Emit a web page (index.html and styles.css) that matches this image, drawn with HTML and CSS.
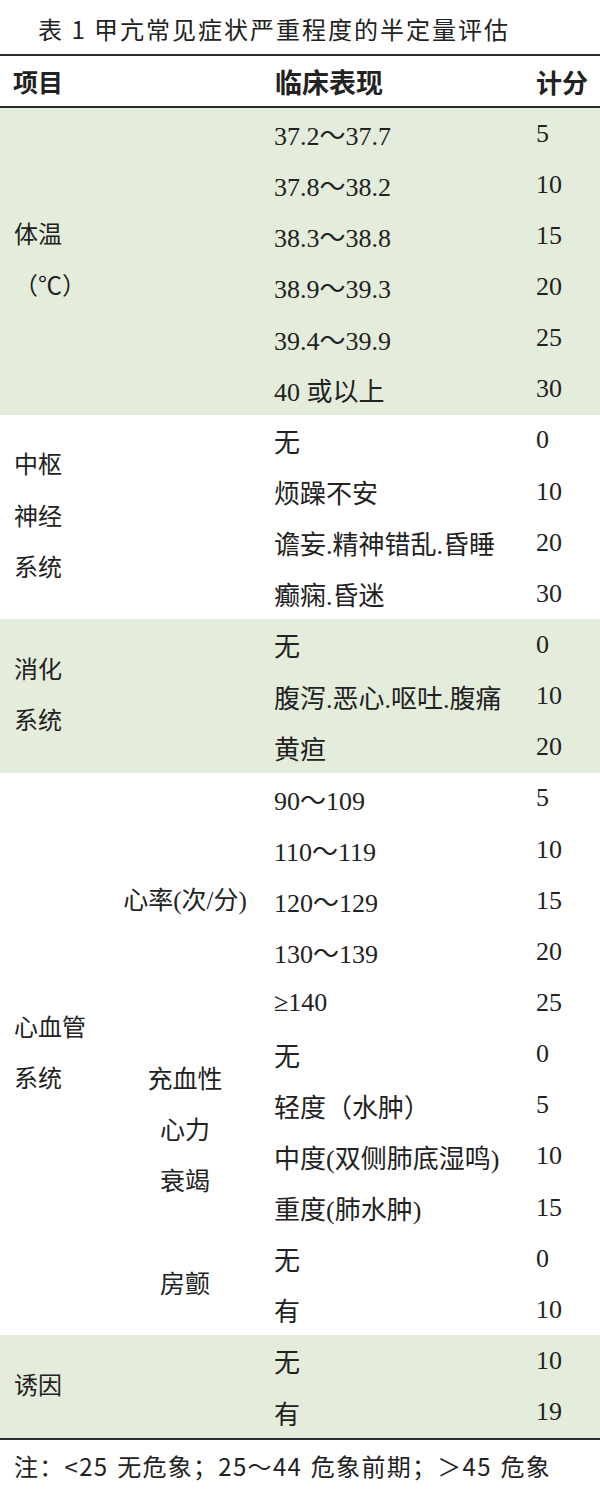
FILE: index.html
```html
<!DOCTYPE html>
<html lang="zh-CN">
<head>
<meta charset="utf-8">
<title>表1 甲亢常见症状严重程度的半定量评估</title>
<link rel="stylesheet" href="styles.css">
</head>
<body>
<div class="page">
  <div class="title">表 1 甲亢常见症状严重程度的半定量评估</div>
  <div class="table">
    <div class="row head">
      <div class="c1">项目</div>
      <div class="c3">临床表现</div>
      <div class="c4">计分</div>
    </div>

    <div class="sec green">
      <div class="cat wide" style="grid-row: 1 / span 6">体温<br>（℃）</div>
      <div class="c3">37.2～37.7</div><div class="c4">5</div>
      <div class="c3">37.8～38.2</div><div class="c4">10</div>
      <div class="c3">38.3～38.8</div><div class="c4">15</div>
      <div class="c3">38.9～39.3</div><div class="c4">20</div>
      <div class="c3">39.4～39.9</div><div class="c4">25</div>
      <div class="c3">40 或以上</div><div class="c4">30</div>
    </div>

    <div class="sec">
      <div class="cat wide" style="grid-row: 1 / span 4">中枢<br>神经<br>系统</div>
      <div class="c3">无</div><div class="c4">0</div>
      <div class="c3">烦躁不安</div><div class="c4">10</div>
      <div class="c3">谵妄.精神错乱.昏睡</div><div class="c4">20</div>
      <div class="c3">癫痫.昏迷</div><div class="c4">30</div>
    </div>

    <div class="sec green">
      <div class="cat wide" style="grid-row: 1 / span 3">消化<br>系统</div>
      <div class="c3">无</div><div class="c4">0</div>
      <div class="c3">腹泻.恶心.呕吐.腹痛</div><div class="c4">10</div>
      <div class="c3">黄疸</div><div class="c4">20</div>
    </div>

    <div class="sec">
      <div class="cat" style="grid-row: 1 / span 11">心血管<br>系统</div>
      <div class="sub" style="grid-row: 1 / span 5">心率(次/分)</div>
      <div class="sub" style="grid-row: 6 / span 4">充血性<br>心力<br>衰竭</div>
      <div class="sub" style="grid-row: 10 / span 2">房颤</div>
      <div class="c3">90～109</div><div class="c4">5</div>
      <div class="c3">110～119</div><div class="c4">10</div>
      <div class="c3">120～129</div><div class="c4">15</div>
      <div class="c3">130～139</div><div class="c4">20</div>
      <div class="c3">≥140</div><div class="c4">25</div>
      <div class="c3">无</div><div class="c4">0</div>
      <div class="c3">轻度（水肿）</div><div class="c4">5</div>
      <div class="c3">中度(双侧肺底湿鸣)</div><div class="c4">10</div>
      <div class="c3">重度(肺水肿)</div><div class="c4">15</div>
      <div class="c3">无</div><div class="c4">0</div>
      <div class="c3">有</div><div class="c4">10</div>
    </div>

    <div class="sec green">
      <div class="cat wide" style="grid-row: 1 / span 2">诱因</div>
      <div class="c3">无</div><div class="c4">10</div>
      <div class="c3">有</div><div class="c4">19</div>
    </div>
  </div>
  <div class="note">注：&lt;25 无危象；25～44 危象前期；＞45 危象</div>
</div>
</body>
</html>
```

FILE: styles.css
```css
* { box-sizing: border-box; }

html, body {
  margin: 0;
  padding: 0;
  background: #ffffff;
}

body {
  width: 600px;
  height: 1491px;
  overflow: hidden;
  color: #222222;
  font-family: "Liberation Serif", "Noto Sans CJK SC", serif;
  font-size: 24px;
}

.page {
  display: flex;
  flex-direction: column;
}

.title {
  height: 54px;
  line-height: 58px;
  padding-left: 38px;
  font-family: "Noto Sans CJK SC", sans-serif;
  font-size: 24px;
  letter-spacing: 2px;
  color: #222222;
}

.table {
  border-top: 2px solid #2a2a2a;
  border-bottom: 2px solid #2a2a2a;
}

.row.head {
  display: grid;
  grid-template-columns: 105px 160px 262px 73px;
  height: 52px;
  align-items: center;
  border-bottom: 2px solid #2a2a2a;
  font-family: "Noto Sans CJK SC", sans-serif;
  font-weight: 700;
  font-size: 26px;
}

.row.head .c1 { grid-column: 1; padding-left: 13px; font-size: 25px; }
.row.head .c3 { grid-column: 3; padding-left: 10px; font-size: 27px; }
.row.head .c4 { grid-column: 4; padding-left: 9px; }

.sec {
  display: grid;
  grid-template-columns: 105px 160px 262px 73px;
  grid-auto-rows: 51.15px;
  background: #ffffff;
}

.sec.green { background: #e4ecdb; }

.sec .c3 {
  grid-column: 3;
  padding-left: 9px;
  display: flex;
  align-items: center;
  white-space: nowrap;
  font-size: 26px;
}

.sec .c4 {
  grid-column: 4;
  padding-left: 9px;
  display: flex;
  align-items: center;
  font-size: 26px;
}

.cat {
  grid-column: 1;
  padding-left: 14px;
  display: flex;
  align-items: center;
  line-height: 51.15px;
  white-space: nowrap;
}

.cat.wide { grid-column: 1 / span 2; }

.sub {
  grid-column: 2;
  display: flex;
  align-items: center;
  justify-content: center;
  text-align: center;
  line-height: 51.15px;
  white-space: nowrap;
  font-size: 25px;
}

.note {
  height: 55px;
  line-height: 52px;
  padding-left: 14px;
  font-family: "Noto Sans CJK SC", sans-serif;
  font-size: 24px;
  letter-spacing: 1.3px;
  word-spacing: 2px;
}
```
